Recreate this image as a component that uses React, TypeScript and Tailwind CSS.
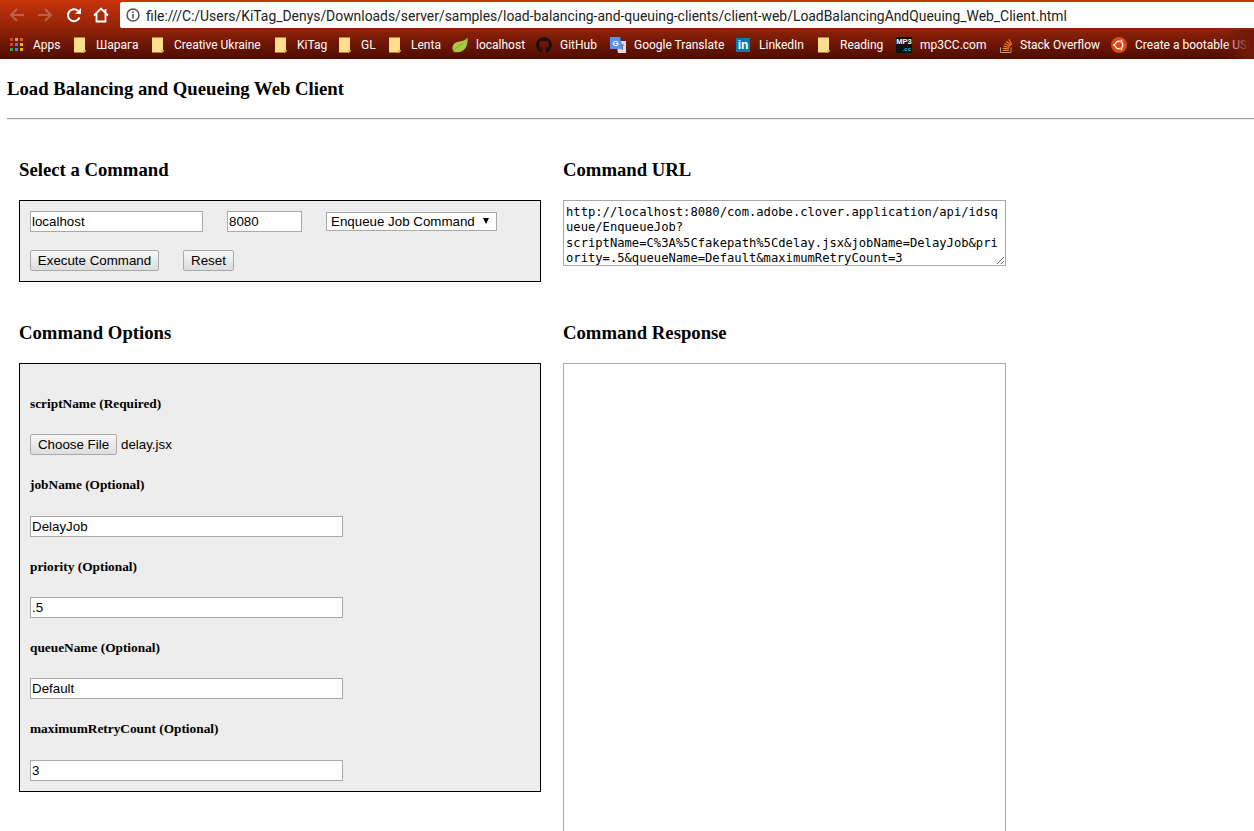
import React from "react";
import { FaGithub } from "react-icons/fa";

function FolderIcon() {
  return (
    <svg width="12" height="16" viewBox="0 0 12 16">
      <path d="M0 .5h11v12.500l-2 2.500H0z" fill="#fbdf8b" />
      <path d="M9 13h3v1l-2 2H9z" fill="#e8b33f" />
    </svg>
  );
}

function AppsIcon() {
  const colors = ["#d9402f", "#e8a21c", "#e85a2a", "#d9402f", "#3f83e6", "#f4b400", "#2f9e55", "#3f83e6", "#f4b400"];
  return (
    <div className="grid grid-cols-[3px_3px_3px] grid-rows-[3px_3px_3px] gap-[2px] w-[13px]">
      {colors.map((c, i) => (
        <div key={i} className="w-[3px] h-[3px]" style={{ backgroundColor: c }} />
      ))}
    </div>
  );
}

function LeafIcon() {
  return (
    <svg width="16" height="16" viewBox="0 0 16 16">
      <path d="M15.500 .5c.6 5.500-.8 10.500-4.500 13C8 15.500 3.500 16 1.500 14.500-.5 11.500.5 7 4 5.500c4-1.500 9-1 11.500-5z" fill="#a7c93f" />
      <path d="M2 14c2-3.500 5-6 9-7.500" stroke="#7ba52b" strokeWidth="1" fill="none" />
    </svg>
  );
}

function TranslateIcon() {
  return (
    <svg width="16" height="16" viewBox="0 0 16 16">
      <path d="M6 4h10v12H8z" fill="#dcdcdc" />
      <path d="M0 0h10l3 12H0z" fill="#5a91ea" />
      <text x="2.500" y="9" fontSize="8" fontWeight="700" fill="#fff" fontFamily="Liberation Sans, sans-serif">G</text>
      <path d="M11 8h3M12.500 8v5" stroke="#777" strokeWidth="1" />
    </svg>
  );
}

function LinkedInIcon() {
  return (
    <div className="w-[14px] h-[14px] bg-[#0a78b5] flex items-center justify-center font-['Liberation_Sans',sans-serif] font-bold text-[12px] leading-[14px] text-white">
      in
    </div>
  );
}

function Mp3Icon() {
  return (
    <div className="w-4 h-4 bg-[#101010] flex flex-col overflow-hidden font-['Liberation_Sans',sans-serif] font-bold">
      <span className="text-[7.500px] leading-[9px] text-white text-center">MP3</span>
      <span className="text-[6px] leading-[6px] text-[#27b6e8] self-end pr-px">.cc</span>
    </div>
  );
}

function StackIcon() {
  return (
    <svg width="13" height="16" viewBox="0 0 13 16">
      <path d="M.5 10.500v5h10.500v-5" fill="none" stroke="#a8a29a" strokeWidth="1" />
      <path d="M2.500 13.500h6.500M2.700 11.300l6.300.6M3.200 9l6.200 1.500M4.500 6.500l5.600 2.800M6.300 4.200l4.700 4M8.700 2.300l3.200 5.200" stroke="#f48024" strokeWidth="1.200" fill="none" />
    </svg>
  );
}

function UbuntuIcon() {
  return (
    <svg width="16" height="16" viewBox="0 0 16 16">
      <circle cx="8" cy="8" r="8" fill="#dd4814" />
      <circle cx="8" cy="8" r="3.800" fill="none" stroke="#fff" strokeWidth="1.400" />
      <circle cx="3.300" cy="8" r="1.400" fill="#fff" stroke="#dd4814" strokeWidth=".6" />
      <circle cx="10.400" cy="4" r="1.400" fill="#fff" stroke="#dd4814" strokeWidth=".6" />
      <circle cx="10.400" cy="12" r="1.400" fill="#fff" stroke="#dd4814" strokeWidth=".6" />
    </svg>
  );
}

const bookmarks: { label: string; icon: React.ReactNode; width: string; slot: string }[] = [
  { label: "Apps", icon: <AppsIcon />, width: "w-[64px]", slot: "w-[23px]" },
  { label: "Шарага", icon: <FolderIcon />, width: "w-[78px]", slot: "w-[22px]" },
  { label: "Creative Ukraine", icon: <FolderIcon />, width: "w-[123px]", slot: "w-[22px]" },
  { label: "KiTag", icon: <FolderIcon />, width: "w-[64px]", slot: "w-[22px]" },
  { label: "GL", icon: <FolderIcon />, width: "w-[50px]", slot: "w-[22px]" },
  { label: "Lenta", icon: <FolderIcon />, width: "w-[63px]", slot: "w-[22px]" },
  { label: "localhost", icon: <LeafIcon />, width: "w-[84px]", slot: "w-[24px]" },
  { label: "GitHub", icon: <FaGithub className="w-4 h-4 text-[#111]" />, width: "w-[74px]", slot: "w-[24px]" },
  { label: "Google Translate", icon: <TranslateIcon />, width: "w-[126px]", slot: "w-[24px]" },
  { label: "LinkedIn", icon: <LinkedInIcon />, width: "w-[82px]", slot: "w-[23px]" },
  { label: "Reading", icon: <FolderIcon />, width: "w-[78px]", slot: "w-[22px]" },
  { label: "mp3CC.com", icon: <Mp3Icon />, width: "w-[104px]", slot: "w-[24px]" },
  { label: "Stack Overflow", icon: <StackIcon />, width: "w-[111px]", slot: "w-[20px]" },
  { label: "Create a bootable USB", icon: <UbuntuIcon />, width: "w-[143px]", slot: "w-[24px]" },
];

const inputClass =
  "block h-[21px] bg-white border border-[#a9a9a9] px-[1px] text-[13.33px] text-black outline-none";
const buttonClass =
  "h-[21px] rounded-[2px] border border-[#a9a9a9] bg-gradient-to-b from-[#f8f8f8] to-[#dddddd] text-[13.33px] leading-[19px] text-black whitespace-nowrap";
const labelClass = "font-['Liberation_Serif',serif] font-bold text-[13.33px] leading-[16px] text-black";
const headingClass = "font-['Liberation_Serif',serif] font-bold text-[18.72px] leading-[22px] text-black";

const options = [
  { label: "jobName (Optional)", value: "DelayJob", gap: "mt-[23px]" },
  { label: "priority (Optional)", value: ".5", gap: "mt-[22px]" },
  { label: "queueName (Optional)", value: "Default", gap: "mt-[22px]" },
  { label: "maximumRetryCount (Optional)", value: "3", gap: "mt-[23px]" },
];

const commandUrl =
  "http://localhost:8080/com.adobe.clover.application/api/idsqueue/EnqueueJob?scriptName=C%3A%5Cfakepath%5Cdelay.jsx&jobName=DelayJob&priority=.5&queueName=Default&maximumRetryCount=3";

export default function App() {
  return (
    <div className="h-[831px] overflow-hidden bg-white font-['Liberation_Sans',sans-serif]">
      {/* Browser chrome */}
      <div className="h-[59px] bg-gradient-to-b from-[#c9340c] via-[#8f2208] to-[#4f0c04]">
        <div className="h-[30px] flex items-start pt-[2px]">
          <div className="w-[120px] h-[26px] flex items-center pl-[9px] gap-[12px]">
            <svg width="16" height="16" viewBox="0 0 16 16" fill="none" stroke="#fff" strokeOpacity=".25" strokeWidth="2">
              <path d="M15 8H2M8 2 2 8l6 6" />
            </svg>
            <svg width="16" height="16" viewBox="0 0 16 16" fill="none" stroke="#fff" strokeOpacity=".25" strokeWidth="2">
              <path d="M1 8h13M8 2l6 6-6 6" />
            </svg>
            <svg width="16" height="16" viewBox="0 0 16 16" fill="none" stroke="#fff" strokeWidth="2" className="ml-[1px]">
              <path d="M13.500 10.500A6 6 0 1 1 12 3.700" />
              <path d="M15 1v6H9z" fill="#fff" stroke="none" />
            </svg>
            <svg width="16" height="16" viewBox="0 0 16 16" fill="none" stroke="#fff" strokeWidth="1.800" className="-ml-[1px]">
              <path d="M1 8.500 8 1.500l7 7M3.500 7v7.500h9V7M12.500 2v4" />
            </svg>
          </div>
          <div className="flex-1 h-[26px] bg-white rounded-tl-[2px] rounded-bl-[2px] flex items-center pl-[6px] gap-[6px]">
            <svg width="14" height="14" viewBox="0 0 14 14">
              <circle cx="7" cy="7" r="6" fill="none" stroke="#555" strokeWidth="1.500" />
              <path d="M6.200 6h1.600v4.500H6.200zM6.200 3.300h1.600v1.600H6.200z" fill="#555" />
            </svg>
            <span className="mt-[2px] font-['Roboto',sans-serif] text-[13.9px] text-[#222] whitespace-nowrap">
              file:///C:/Users/KiTag_Denys/Downloads/server/samples/load-balancing-and-queuing-clients/client-web/LoadBalancingAndQueuing_Web_Client.html
            </span>
          </div>
        </div>
        <div className="relative h-[29px] pl-[10px] flex items-center overflow-hidden font-['Roboto',sans-serif] text-[12px] text-white whitespace-nowrap">
          {bookmarks.map((b) => (
            <div key={b.label} className={`${b.width} shrink-0 flex items-center`}>
              <div className={`${b.slot} shrink-0 flex items-center`}>{b.icon}</div>
              <span>{b.label}</span>
            </div>
          ))}
          <div className="absolute right-0 top-0 h-full w-[30px] bg-gradient-to-r from-transparent via-[#701808]/70 via-60% to-[#701808] to-85%" />
        </div>
      </div>

      {/* Page title */}
      <h1 className={`${headingClass} pl-[7px] pt-[19px]`}>Load Balancing and Queueing Web Client</h1>
      <hr className="mt-[18px] ml-[7px] border-t border-b border-t-[#9a9a9a] border-b-[#eeeeee]" />

      <div className="pl-[19px] pt-[39px] grid grid-cols-[522px_443px] gap-x-[22px]">
        <h2 className={headingClass}>Select a Command</h2>
        <h2 className={headingClass}>Command URL</h2>

        <div className="mt-[19px] h-[82px] border border-black bg-[#ededed] p-[10px]">
          <div className="flex items-center">
            <input className={`${inputClass} w-[173px]`} defaultValue="localhost" />
            <input className={`${inputClass} w-[75px] ml-[24px]`} defaultValue="8080" />
            <div className="relative ml-[24px]">
              <select className="block appearance-none w-[171px] h-[19px] bg-white border border-[#a9a9a9] pl-[4px] text-[13.33px] leading-[17px] text-black outline-none">
                <option>Enqueue Job Command</option>
              </select>
              <span className="absolute right-[8px] top-[6px] w-0 h-0 border-x-[3.500px] border-x-transparent border-t-[6px] border-t-black" />
            </div>
          </div>
          <div className="flex mt-[18px]">
            <button className={`${buttonClass} w-[129px]`}>Execute Command</button>
            <button className={`${buttonClass} w-[51px] ml-[24px]`}>Reset</button>
          </div>
        </div>
        <div className="mt-[19px]">
          <textarea
            className="block w-[443px] h-[66px] border border-[#a9a9a9] pt-[4px] px-[2px] pb-0 font-['DejaVu_Sans_Mono',monospace] text-[12.17px] leading-[15.3px] text-black outline-none overflow-hidden"
            defaultValue={commandUrl}
          />
        </div>

        <h2 className={`${headingClass} mt-[40px]`}>Command Options</h2>
        <h2 className={`${headingClass} mt-[40px]`}>Command Response</h2>

        <div className="mt-[19px] h-[429px] border border-black bg-[#ededed] px-[10px] pt-[32px]">
          <div className={labelClass}>scriptName (Required)</div>
          <div className="flex items-center mt-[22px]">
            <button className={`${buttonClass} w-[87px]`}>Choose File</button>
            <span className="ml-[4px] text-[13.33px] text-black">delay.jsx</span>
          </div>
          {options.map((o) => (
            <div key={o.label}>
              <div className={`${labelClass} mt-[22px]`}>{o.label}</div>
              <input className={`${inputClass} w-[313px] ${o.gap}`} defaultValue={o.value} />
            </div>
          ))}
        </div>
        <div className="mt-[19px] h-[480px] border border-[#a9a9a9] bg-white" />
      </div>
    </div>
  );
}
